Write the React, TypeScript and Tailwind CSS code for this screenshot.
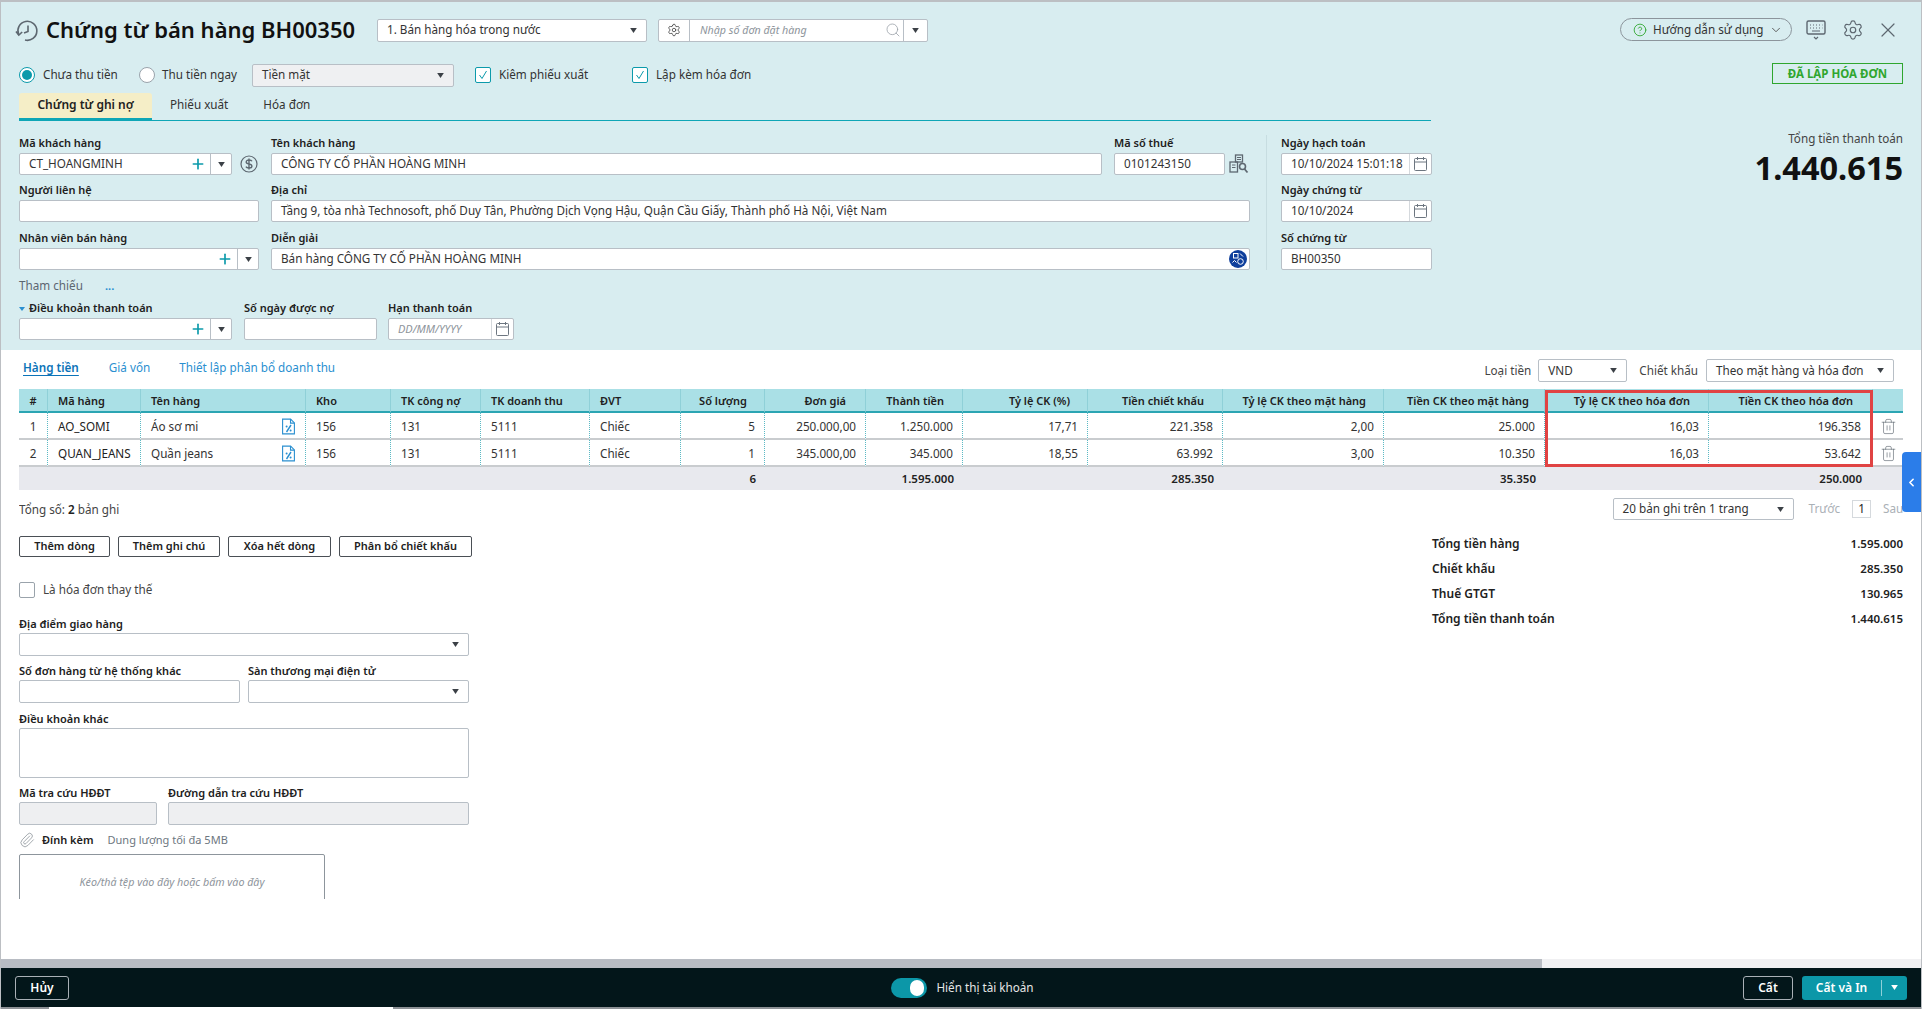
import React from 'react';
import { ChevronDown, ChevronLeft, CircleHelp, Paperclip, Plus, Search, Settings, Trash2, X } from 'lucide-react';

const Caret = ({ className = '' }: { className?: string }) => (
  <svg width="7" height="5" viewBox="0 0 8 6" className={`shrink-0 ${className}`}>
    <path d="M0 0h8L4 6z" fill="#3b4046" />
  </svg>
);

const Label = ({ children, className = '' }: { children: React.ReactNode; className?: string }) => (
  <div className={`h-[18px] text-[11px] leading-[16px] font-semibold text-[#212121] whitespace-nowrap ${className}`}>{children}</div>
);

// nhãn ở phần dưới nằm sát ô nhập hơn một chút
const FormLabel = ({ children, className = '' }: { children: React.ReactNode; className?: string }) => (
  <div className={`h-[18px] text-[11px] leading-[18px] font-semibold text-[#212121] whitespace-nowrap ${className}`}>{children}</div>
);

const Box = ({ className = '', children }: { className?: string; children?: React.ReactNode }) => (
  <div className={`h-[22px] flex items-center border border-[#b8bfc6] rounded-[2px] text-[11.7px] text-[#333] whitespace-nowrap ${className.includes('bg-') ? '' : 'bg-white'} ${className}`}>
    {children}
  </div>
);

const Value = ({ children }: { children?: React.ReactNode }) => <span className="pl-[9px] flex-1 truncate">{children}</span>;

const Combo = ({ children, className = '' }: { children?: React.ReactNode; className?: string }) => (
  <Box className={className}>
    <Value>{children}</Value>
    <Plus size={16} strokeWidth={2.5} className="text-[#0b9aab] mr-[4px]" />
    <span className="w-[21px] h-full border-l border-[#b8bfc6] flex items-center justify-center">
      <Caret />
    </span>
  </Box>
);

const Select = ({ children, className = '' }: { children?: React.ReactNode; className?: string }) => (
  <Box className={`px-[9px] justify-between ${className}`}>
    <span>{children}</span>
    <Caret />
  </Box>
);

const Calendar = () => (
  <span className="w-[22px] h-full flex items-center justify-center border-l border-[#d5d9dd]">
    <svg width="15" height="16" viewBox="0 0 15 16" fill="none" stroke="#6d7680" strokeWidth="1">
      <rect x="1.500" y="2.500" width="12" height="12" rx="1" />
      <path d="M1.500 6h12M4.500 1v3M10.500 1v3" />
    </svg>
  </span>
);

const DateBox = ({ children }: { children: React.ReactNode }) => (
  <Box>
    <Value>{children}</Value>
    <Calendar />
  </Box>
);

const HistoryIcon = () => (
  <svg width="24" height="24" viewBox="0 0 24 24" fill="none" stroke="#5d6770" strokeWidth="1.600" className="shrink-0">
    <path d="M3.600 15.500A9.500 9.500 0 1 1 10 21" />
    <path d="M1 12.500l2.800 3.500 3.400-3" />
    <path d="M13 6.500v6l-4 1.500" />
  </svg>
);

const DollarIcon = () => (
  <svg width="18" height="18" viewBox="0 0 18 18" fill="none" stroke="#5d6770" className="ml-[8px]">
    <circle cx="9" cy="9" r="8" strokeWidth="1.200" />
    <path d="M12 6.300C11.500 5.300 10.400 5 9 5 7.400 5 6.200 5.700 6.200 7S7.500 8.700 9 9s2.900.9 2.900 2.200S10.600 13 9 13c-1.500 0-2.600-.4-3.100-1.400M9 3.500v11" strokeWidth="1.400" />
  </svg>
);

const TaxLookupIcon = () => (
  <svg width="20" height="20" viewBox="0 0 20 20" fill="none" stroke="#5d6770" strokeWidth="1.300" className="ml-[4px] shrink-0">
    <rect x="6.500" y="1" width="7" height="7" />
    <rect x="1" y="8" width="7.500" height="10" />
    <path d="M8 3.500h4M8 5.500h4M3 11h3.500M3 13.500h3.500" strokeWidth="1" />
    <circle cx="13.500" cy="12.500" r="3" strokeWidth="1.600" />
    <path d="M15.500 15l3 3.500" strokeWidth="1.800" />
  </svg>
);

const GlobeBadgeIcon = () => (
  <svg width="18" height="18" viewBox="0 0 18 18" className="mr-[2px] shrink-0">
    <circle cx="9" cy="9" r="9" fill="#0f3f9c" />
    <rect x="4.500" y="3.500" width="4.500" height="4.500" fill="none" stroke="#fff" strokeWidth="1" />
    <circle cx="11.500" cy="11.500" r="2.800" fill="none" stroke="#fff" strokeWidth="1" />
    <path d="M3.500 12.500l2-2 2 2M11 3.500l3 3" fill="none" stroke="#fff" strokeWidth="1" />
  </svg>
);

const FileIcon = () => (
  <svg width="13" height="17" viewBox="0 0 13 16" fill="none" stroke="#2a8fd0" strokeWidth="1.100" className="shrink-0">
    <path d="M.6.6h8l3.800 3.800v11H.6z" />
    <path d="M8.500.6v4h3.900" />
    <path d="M9 6.500l-4.500 7" strokeWidth="1.400" />
    <circle cx="4.600" cy="8" r="1" fill="#2a8fd0" stroke="none" />
    <circle cx="8.600" cy="12" r="1" fill="#2a8fd0" stroke="none" />
  </svg>
);

const KeyboardIcon = () => (
  <svg width="20" height="22" viewBox="0 0 20 22" fill="none" stroke="#5d6770" strokeWidth="1.400">
    <rect x="1" y="2" width="18" height="13" rx="1.500" />
    <path d="M4 6h1M7 6h1M10 6h1M13 6h1M16 6h.5M4 9h1M7 9h1M10 9h1M13 9h1M16 9h.5M6 12h8" strokeWidth="1.200" />
    <path d="M8 18l2 2 2-2" strokeWidth="1.200" />
  </svg>
);

const CheckBox = () => (
  <span className="w-[16px] h-[16px] border border-[#0b9aab] rounded-[2px] bg-white flex items-center justify-center">
    <svg width="10" height="10" viewBox="0 0 10 10" fill="none" stroke="#0b9aab" strokeWidth="1">
      <path d="M1.500 5l2.500 3.500L8.500 1" />
    </svg>
  </span>
);

const columns = [
  { w: 'w-[29px]', title: '#', head: 'text-center', cell: 'text-center' },
  { w: 'w-[93px]', title: 'Mã hàng', head: 'text-left pl-[10px]', cell: 'text-left pl-[10px]' },
  { w: 'w-[165px]', title: 'Tên hàng', head: 'text-left pl-[10px]', cell: 'text-left pl-[10px]' },
  { w: 'w-[85px]', title: 'Kho', head: 'text-left pl-[10px]', cell: 'text-left pl-[10px]' },
  { w: 'w-[90px]', title: 'TK công nợ', head: 'text-left pl-[10px]', cell: 'text-left pl-[10px]' },
  { w: 'w-[109px]', title: 'TK doanh thu', head: 'text-left pl-[10px]', cell: 'text-left pl-[10px]' },
  { w: 'w-[91px]', title: 'ĐVT', head: 'text-left pl-[10px]', cell: 'text-left pl-[10px]' },
  { w: 'w-[84px]', title: 'Số lượng', head: 'text-right pr-[17px]', cell: 'text-right pr-[9px]' },
  { w: 'w-[101px]', title: 'Đơn giá', head: 'text-right pr-[19px]', cell: 'text-right pr-[9px]' },
  { w: 'w-[97px]', title: 'Thành tiền', head: 'text-right pr-[18px]', cell: 'text-right pr-[9px]' },
  { w: 'w-[125px]', title: 'Tỷ lệ CK (%)', head: 'text-right pr-[17px]', cell: 'text-right pr-[9px]' },
  { w: 'w-[135px]', title: 'Tiền chiết khấu', head: 'text-right pr-[18px]', cell: 'text-right pr-[9px]' },
  { w: 'w-[161px]', title: 'Tỷ lệ CK theo mặt hàng', head: 'text-right pr-[17px]', cell: 'text-right pr-[9px]' },
  { w: 'w-[161px]', title: 'Tiền CK theo mặt hàng', head: 'text-right pr-[15px]', cell: 'text-right pr-[9px]' },
  { w: 'w-[164px]', title: 'Tỷ lệ CK theo hóa đơn', head: 'text-right pr-[18px]', cell: 'text-right pr-[9px]' },
  { w: 'w-[164px]', title: 'Tiền CK theo hóa đơn', head: 'text-right pr-[19px]', cell: 'text-right pr-[11px]' },
  { w: 'w-[30px]', title: '', head: '', cell: 'text-center' },
];

const rows = [
  ['1', 'AO_SOMI', 'Áo sơ mi', '156', '131', '5111', 'Chiếc', '5', '250.000,00', '1.250.000', '17,71', '221.358', '2,00', '25.000', '16,03', '196.358', ''],
  ['2', 'QUAN_JEANS', 'Quần jeans', '156', '131', '5111', 'Chiếc', '1', '345.000,00', '345.000', '18,55', '63.992', '3,00', '10.350', '16,03', '53.642', ''],
];

const footer = ['', '', '', '', '', '', '', '6', '', '1.595.000', '', '285.350', '', '35.350', '', '250.000', ''];

const totals = [
  ['Tổng tiền hàng', '1.595.000'],
  ['Chiết khấu', '285.350'],
  ['Thuế GTGT', '130.965'],
  ['Tổng tiền thanh toán', '1.440.615'],
];

const LineButton = ({ children, className = '' }: { children: React.ReactNode; className?: string }) => (
  <button className={`h-[21px] border border-[#4a4f55] rounded-[2px] bg-white text-[11px] font-semibold text-[#212121] ${className}`}>
    {children}
  </button>
);

const Header = () => (
  <section className="h-[348px] shrink-0 bg-[#d8edf0] flex">
    <div className="w-[1430px] shrink-0 pl-[18px] pt-[16px]">
      <div className="h-[24px] flex items-center">
        <span className="-ml-[4px] mr-[7px] mt-[2px]"><HistoryIcon /></span>
        <h1 className="w-[331px] -mt-[2px] text-[22px] leading-[24px] font-semibold text-[#111] whitespace-nowrap">Chứng từ bán hàng BH00350</h1>
        <Select className="w-[270px] h-[23px]">1. Bán hàng hóa trong nước</Select>
        <Box className="w-[270px] h-[23px] ml-[11px]">
          <span className="w-[31px] h-full border-r border-[#b8bfc6] flex items-center justify-center">
            <Settings size={14} strokeWidth={1.4} className="text-[#444]" />
          </span>
          <span className="pl-[10px] flex-1 italic text-[10.7px] text-[#8d949b]">Nhập số đơn đặt hàng</span>
          <Search size={16} strokeWidth={1.2} className="text-[#9aa1a8] mr-[2px]" />
          <span className="w-[24px] h-full border-l border-[#b8bfc6] flex items-center justify-center">
            <Caret />
          </span>
        </Box>
      </div>

      <div className="mt-[21px] h-[24px] flex items-center text-[11.7px] text-[#333] whitespace-nowrap">
        <span className="w-[16px] h-[16px] rounded-full border border-[#0b9aab] bg-white flex items-center justify-center mr-[8px]">
          <span className="w-[10px] h-[10px] rounded-full bg-[#0b9aab]" />
        </span>
        <span className="w-[96px]">Chưa thu tiền</span>
        <span className="w-[16px] h-[16px] rounded-full border border-[#9aa3ab] bg-white mr-[7px]" />
        <span className="w-[90px]">Thu tiền ngay</span>
        <Select className="w-[202px] h-[23px] bg-[#eff0f2]">Tiền mặt</Select>
        <span className="ml-[21px] mr-[8px]"><CheckBox /></span>
        <span className="w-[133px]">Kiêm phiếu xuất</span>
        <span className="mr-[8px]"><CheckBox /></span>
        <span>Lập kèm hóa đơn</span>
      </div>

      <div className="mt-[6px] h-[28px] flex border-b border-[#0fa6b6] text-[11.7px] text-[#333]">
        <div className="w-[133px] h-[28px] pb-[1px] bg-[#f5eec7] border-b-[3px] border-[#0fa6b6] rounded-t-[3px] flex items-center justify-center text-[12px] font-semibold text-[#212121]">
          Chứng từ ghi nợ
        </div>
        <div className="ml-[18px] flex items-center pb-[3px]">Phiếu xuất</div>
        <div className="ml-[35px] flex items-center pb-[3px]">Hóa đơn</div>
      </div>

      <div className="mt-[14px] flex">
        <div className="w-[1248px] shrink-0 pr-[16px] border-r border-[#c7dde1]">
          <div className="flex gap-[12px]">
            <div className="w-[240px]">
              <Label>Mã khách hàng</Label>
              <div className="flex items-center">
                <Combo className="w-[213px]">CT_HOANGMINH</Combo>
                <DollarIcon />
              </div>
            </div>
            <div className="w-[831px]">
              <Label>Tên khách hàng</Label>
              <Box><Value>CÔNG TY CỔ PHẦN HOÀNG MINH</Value></Box>
            </div>
            <div className="w-[111px]">
              <Label>Mã số thuế</Label>
              <div className="flex items-center w-[136px]">
                <Box className="w-[111px] shrink-0"><Value>0101243150</Value></Box>
                <TaxLookupIcon />
              </div>
            </div>
          </div>

          <div className="mt-[7px] flex gap-[12px]">
            <div className="w-[240px]">
              <Label>Người liên hệ</Label>
              <Box />
            </div>
            <div className="w-[979px]">
              <Label>Địa chỉ</Label>
              <Box><Value>Tầng 9, tòa nhà Technosoft, phố Duy Tân, Phường Dịch Vọng Hậu, Quận Cầu Giấy, Thành phố Hà Nội, Việt Nam</Value></Box>
            </div>
          </div>

          <div className="mt-[8px] flex gap-[12px]">
            <div className="w-[240px]">
              <Label>Nhân viên bán hàng</Label>
              <Combo />
            </div>
            <div className="w-[979px]">
              <Label>Diễn giải</Label>
              <Box>
                <Value>Bán hàng CÔNG TY CỔ PHẦN HOÀNG MINH</Value>
                <GlobeBadgeIcon />
              </Box>
            </div>
          </div>
        </div>

        <div className="w-[151px] ml-[14px] shrink-0">
          <Label>Ngày hạch toán</Label>
          <DateBox>10/10/2024 15:01:18</DateBox>
          <Label className="mt-[7px]">Ngày chứng từ</Label>
          <DateBox>10/10/2024</DateBox>
          <Label className="mt-[8px]">Số chứng từ</Label>
          <Box><Value>BH00350</Value></Box>
        </div>
      </div>

      <div className="mt-[8px] h-[16px] flex items-center text-[11.7px] text-[#5c6670]">
        <span className="w-[86px]">Tham chiếu</span>
        <span className="text-[11px] text-[#2a8fd0] font-bold leading-[8px]">...</span>
      </div>

      <div className="mt-[6px] flex">
        <div className="w-[213px] relative">
          <Label className="pl-[10px]">Điều khoản thanh toán</Label>
          <Combo />
          <span className="absolute left-0 top-[7px] border-x-[3px] border-t-[4px] border-x-transparent border-t-[#2a8fd0]" />
        </div>
        <div className="w-[133px] ml-[12px]">
          <Label>Số ngày được nợ</Label>
          <Box />
        </div>
        <div className="w-[126px] ml-[11px]">
          <Label>Hạn thanh toán</Label>
          <Box>
            <span className="pl-[9px] flex-1 italic text-[11px] text-[#8d949b]">DD/MM/YYYY</span>
            <Calendar />
          </Box>
        </div>
      </div>
    </div>

    <div className="flex-1 pt-[16px] pr-[18px] flex flex-col items-end">
      <div className="h-[23px] flex items-center mr-[3px]">
        <div className="w-[172px] h-[23px] flex items-center pl-[12px] border border-[#8c959c] rounded-full text-[11.7px] text-[#333] whitespace-nowrap">
          <CircleHelp size={14} strokeWidth={1.5} className="text-[#2fa62f] mr-[6px]" />
          Hướng dẫn sử dụng
          <ChevronDown size={14} strokeWidth={1.6} className="text-[#555] ml-[5px]" />
        </div>
        <span className="ml-[14px]"><KeyboardIcon /></span>
        <Settings size={22} strokeWidth={1.3} className="text-[#5d6770] ml-[16px]" />
        <X size={24} strokeWidth={1.2} className="text-[#5d6770] ml-[12px]" />
      </div>
      <div className="mt-[22px] w-[131px] h-[21px] flex items-center justify-center border border-[#2fa62f] text-[11.5px] font-bold text-[#2fa62f]">
        ĐÃ LẬP HÓA ĐƠN
      </div>
      <div className="mt-[46px] h-[16px] text-[11.7px] leading-[16px] text-[#444]">Tổng tiền thanh toán</div>
      <div className="mt-[4px] h-[36px] text-[32.5px] leading-[36px] font-bold text-[#111]">1.440.615</div>
    </div>
  </section>
);

const LineGrid = () => (
  <div className="relative w-[1884px] mt-[7px]">
    <table className="w-[1884px] table-fixed border-separate border-spacing-0 text-[11.7px] text-[#333]">
      <colgroup>
        {columns.map((c) => <col key={c.title} className={c.w} />)}
      </colgroup>
      <thead>
        <tr className="h-[24px] bg-[#aae0e6]">
          {columns.map((c, i) => (
            <th key={c.title} className={`p-0 pt-[2px] border-b-2 border-b-[#2ba5b3] text-[11px] font-semibold text-[#212121] whitespace-nowrap ${i < 16 ? 'border-r border-r-[#8fd0d8]' : ''} ${c.head}`}>
              {c.title}
            </th>
          ))}
        </tr>
      </thead>
      <tbody>
        {rows.map((row) => (
          <tr key={row[0]} className="h-[27px] bg-white">
            {row.map((v, i) => (
              <td key={i} className={`p-0 pt-[3px] border-b-2 border-b-[#c9cccf] whitespace-nowrap ${i < 16 ? 'border-r border-r-[#5bb9c4] [border-right-style:dotted]' : ''} ${columns[i].cell} ${i === 1 ? 'text-[#212121]' : ''}`}>
                {i === 2 ? (
                  <div className="flex items-center justify-between pr-[10px]">
                    {v}
                    <FileIcon />
                  </div>
                ) : i === 16 ? (
                  <Trash2 size={17} strokeWidth={0.9} className="inline text-[#5d6770] mb-[1px]" />
                ) : (
                  v
                )}
              </td>
            ))}
          </tr>
        ))}
        <tr className="h-[23px] bg-[#e8e9ee]">
          {footer.map((v, i) => (
            <td key={i} className={`p-0 text-[11.5px] font-semibold text-[#212121] ${columns[i].cell}`}>{v}</td>
          ))}
        </tr>
      </tbody>
    </table>
    {/* khung đỏ đánh dấu hai cột chiết khấu hóa đơn */}
    <div className="absolute left-[1526px] top-[1px] w-[328px] h-[77px] border-[3px] border-[#e04343] pointer-events-none" />
  </div>
);

const DetailForm = () => (
  <div>
    <div className="flex gap-[8px]">
      <LineButton className="w-[91px]">Thêm dòng</LineButton>
      <LineButton className="w-[102px]">Thêm ghi chú</LineButton>
      <LineButton className="w-[103px]">Xóa hết dòng</LineButton>
      <LineButton className="w-[133px]">Phân bổ chiết khấu</LineButton>
    </div>

    <div className="mt-[25px] h-[16px] flex items-center text-[11.7px] text-[#444]">
      <span className="w-[16px] h-[16px] border border-[#9aa3ab] rounded-[2px] bg-white mr-[8px]" />
      Là hóa đơn thay thế
    </div>

    <FormLabel className="mt-[17px]">Địa điểm giao hàng</FormLabel>
    <Select className="w-[450px] h-[23px]" />

    <div className="mt-[6px] flex gap-[8px]">
      <div className="w-[221px]">
        <FormLabel>Số đơn hàng từ hệ thống khác</FormLabel>
        <Box className="h-[23px]" />
      </div>
      <div className="w-[221px]">
        <FormLabel>Sàn thương mại điện tử</FormLabel>
        <Select className="h-[23px]" />
      </div>
    </div>

    <FormLabel className="mt-[7px]">Điều khoản khác</FormLabel>
    <Box className="w-[450px] h-[50px]" />

    <div className="mt-[6px] flex gap-[11px]">
      <div className="w-[138px]">
        <FormLabel>Mã tra cứu HĐĐT</FormLabel>
        <Box className="h-[23px] bg-[#eeeff1]" />
      </div>
      <div className="w-[301px]">
        <FormLabel>Đường dẫn tra cứu HĐĐT</FormLabel>
        <Box className="h-[23px] bg-[#eeeff1]" />
      </div>
    </div>

    <div className="mt-[7px] h-[16px] flex items-center whitespace-nowrap">
      <Paperclip size={16} strokeWidth={1.2} className="text-[#8d949b] mr-[7px]" />
      <span className="text-[11px] font-semibold text-[#212121] mr-[14px]">Đính kèm</span>
      <span className="text-[11px] text-[#6d7680]">Dung lượng tối đa 5MB</span>
    </div>
    <div className="mt-[6px] w-[306px] h-[60px] border border-[#8d959c] rounded-t-[2px] pt-[19px] text-center text-[10.7px] italic text-[#8d949b]">
      Kéo/thả tệp vào đây hoặc bấm vào đây
    </div>
  </div>
);

const Body = () => (
  <section className="h-[609px] shrink-0 bg-white">
    <div className="h-[549px] pl-[18px] pt-[9px] overflow-hidden">
      <div className="w-[1884px] h-[23px] flex items-center justify-between pr-[9px] text-[11.7px]">
        <div className="flex pl-[4px] mb-[5px] text-[#2a8fd0] whitespace-nowrap">
          <span className="font-semibold text-[#0b73b8] underline underline-offset-[3px]">Hàng tiền</span>
          <span className="ml-[30px]">Giá vốn</span>
          <span className="ml-[29px]">Thiết lập phân bổ doanh thu</span>
        </div>
        <div className="flex items-center text-[#444] whitespace-nowrap">
          Loại tiền
          <Select className="w-[89px] h-[23px] ml-[7px]">VND</Select>
          <span className="ml-[12px] mr-[8px]">Chiết khấu</span>
          <Select className="w-[188px] h-[23px]">Theo mặt hàng và hóa đơn</Select>
        </div>
      </div>

      <LineGrid />

      <div className="w-[1884px] h-[22px] mt-[8px] flex items-center justify-between text-[11.7px] text-[#444] overflow-hidden">
        <span className="pt-[1px]">Tổng số: <b className="font-semibold text-[#212121]">2</b> bản ghi</span>
        <div className="flex items-center whitespace-nowrap -mr-[4px]">
          <Select className="w-[181px]">20 bản ghi trên 1 trang</Select>
          <span className="ml-[15px] text-[#aab0b6]">Trước</span>
          <span className="ml-[12px] w-[19px] h-[18px] border border-[#d5d9dd] flex items-center justify-center text-[#212121]">1</span>
          <span className="ml-[12px] w-[24px] text-[#aab0b6]">Sau</span>
        </div>
      </div>

      <div className="w-[1884px] mt-[16px] flex justify-between">
        <DetailForm />
        <div className="w-[471px] flex flex-col gap-[9px]">
          {totals.map(([k, v]) => (
            <div key={k} className="h-[16px] flex items-center justify-between font-semibold text-[#212121]">
              <span className="text-[12px]">{k}</span>
              <span className="text-[11.5px]">{v}</span>
            </div>
          ))}
        </div>
      </div>
    </div>
  </section>
);

const ActionBar = () => (
  <footer className="h-[39px] shrink-0 bg-[#03161a] grid grid-cols-[1fr_auto_1fr] items-center text-[12px] font-semibold text-white">
    <div className="pl-[14px]">
      <button className="w-[54px] h-[24px] border border-[#aab0b6] rounded-[3px]">Hủy</button>
    </div>
    <div className="flex items-center pl-[3px] font-normal text-[11.7px] text-[#e6e6e6]">
      <span className="w-[36px] h-[20px] rounded-full bg-[#0c97a8] flex items-center justify-end pr-[3px] mr-[9px]">
        <span className="w-[14px] h-[16px] rounded-full bg-white" />
      </span>
      Hiển thị tài khoản
    </div>
    <div className="flex justify-end pr-[14px]">
      <button className="w-[50px] h-[24px] border border-[#aab0b6] rounded-[3px]">Cất</button>
      <button className="w-[105px] h-[24px] ml-[9px] rounded-[3px] bg-[#0c97a8] flex items-center">
        <span className="w-[79px] text-center">Cất và In</span>
        <span className="flex-1 h-[16px] border-l border-[#8fd0d8] flex items-center justify-center">
          <svg width="7" height="5" viewBox="0 0 8 6"><path d="M0 0h8L4 6z" fill="#fff" /></svg>
        </span>
      </button>
    </div>
  </footer>
);

export default function App() {
  return (
    <div className="relative w-[1922px] h-[1009px] flex flex-col overflow-hidden border-t-2 border-x border-[#bcbfc3] font-['Noto_Sans',sans-serif]">
      <Header />
      <Body />
      <div className="h-[9px] shrink-0 bg-[#f0f0f2]">
        <div className="w-[1541px] h-full bg-[#b8bcc3]" />
      </div>
      <ActionBar />
      <div className="h-[2px] shrink-0 bg-[#8d9196] pl-[48px]">
        <div className="w-[344px] h-full bg-white" />
      </div>
      <button className="absolute right-0 top-[450px] w-[19px] h-[60px] bg-[#2b7de9] rounded-l-[4px] flex items-center justify-center">
        <ChevronLeft size={13} strokeWidth={3} className="text-white" />
      </button>
    </div>
  );
}
